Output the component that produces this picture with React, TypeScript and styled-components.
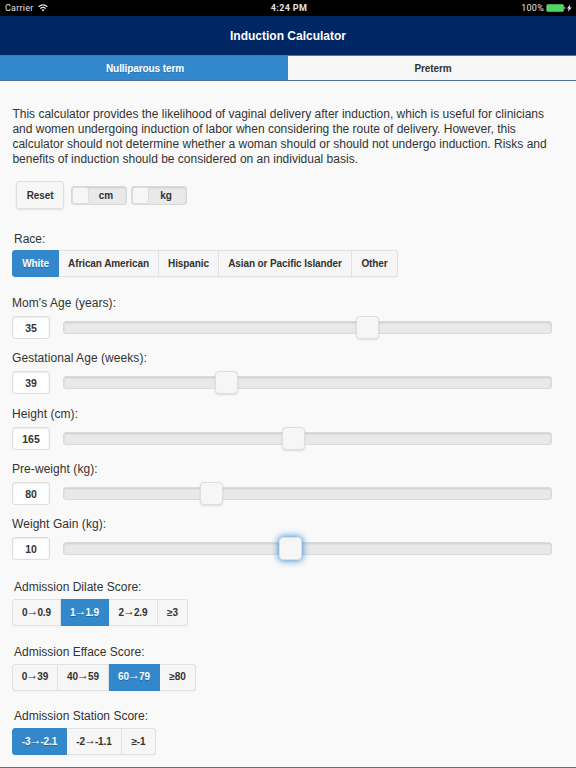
import React from "react";
import styled, { createGlobalStyle, css } from "styled-components";

const Global = createGlobalStyle`
  * { box-sizing: border-box; }
  html, body { margin: 0; padding: 0; background: #f9f9f9; }
  body { overflow: hidden; }
`;

const Page = styled.div`
  width: 576px;
  height: 768px;
  overflow: hidden;
  display: flex;
  flex-direction: column;
  background: #f9f9f9;
  color: #333;
  font-family: "Liberation Sans", Arial, Helvetica, sans-serif;
  font-size: 12px;
  border-bottom: 1px solid #6d6d6d;
`;

const StatusBar = styled.div`
  flex: none;
  height: 16px;
  display: grid;
  grid-template-columns: 1fr auto 1fr;
  align-items: center;
  padding: 0 4px 0 5px;
  background: #000;
  color: #e4e4e4;
  font: 9px/16px Roboto, "Liberation Sans", sans-serif;
  letter-spacing: 0.25px;
`;

const StatusSide = styled.div<{ $end?: boolean }>`
  display: flex;
  align-items: center;
  justify-content: ${(p) => (p.$end ? "flex-end" : "flex-start")};
  gap: ${(p) => (p.$end ? 2 : 4)}px;
`;

const Clock = styled.div`
  font-weight: 700;
  letter-spacing: 0.35px;
  padding-left: 1px;
`;

const Header = styled.header`
  flex: none;
  height: 39px;
  display: flex;
  align-items: center;
  justify-content: center;
  background: #002663;
  color: #fff;
  font-size: 12px;
  font-weight: 700;
  padding-top: 1px;
`;

const Tabs = styled.nav`
  flex: none;
  height: 26px;
  display: grid;
  grid-template-columns: 1fr 1fr;
  border-top: 1px solid #4674ae;
  border-bottom: 1px solid #4f6f9f;
`;

const Tab = styled.div<{ $active?: boolean }>`
  display: flex;
  align-items: center;
  justify-content: center;
  padding-top: 1px;
  padding-left: 2px;
  font-size: 10px;
  font-weight: 700;
  letter-spacing: -0.09px;
  background: ${(p) => (p.$active ? "#3388cc" : "#f6f6f6")};
  color: ${(p) => (p.$active ? "#fff" : "#333")};
  text-shadow: 0 1px 0 ${(p) => (p.$active ? "#0055884d" : "#f3f3f3")};
`;

const Content = styled.main`
  padding: 26px 12px 0;
`;

const Intro = styled.p`
  margin: 0;
  padding-left: 0.4px;
  height: 60px;
  line-height: 15px;
  white-space: nowrap;
`;

const IntroLine = styled.span`
  display: block;
`;

const Controls = styled.div`
  display: flex;
  align-items: center;
  height: 28px;
  margin: 14px 0 0 4px;
`;

const ResetButton = styled.button`
  width: 48px;
  height: 28px;
  margin-right: 7px;
  padding: 0;
  border: 1px solid #dfdfdf;
  border-radius: 3px;
  background: #f6f6f6;
  box-shadow: 0 1px 2px rgba(0, 0, 0, 0.09);
  color: #333;
  font: 700 10px "Liberation Sans", Arial, sans-serif;
  letter-spacing: -0.1px;
`;

const Toggle = styled.div`
  display: flex;
  width: 56px;
  height: 19px;
  margin-right: 4px;
  border: 1px solid #d8d8d8;
  border-radius: 3px;
  background: #e9e9e9;
  box-shadow: inset 0 1px 2px rgba(0, 0, 0, 0.12);
  font-size: 10px;
  font-weight: 700;
  line-height: 17px;
`;

const ToggleKnob = styled.div`
  width: 17px;
  height: 17px;
  border: 1px solid #dedede;
  border-radius: 3px;
  background: #f6f6f6;
`;

const ToggleLabel = styled.div`
  flex: 1;
  padding-right: 3px;
  text-align: center;
`;

const Label = styled.div<{ $height: number; $line?: number; $indent?: number; $spacing?: number }>`
  height: ${(p) => p.$height}px;
  line-height: ${(p) => p.$line ?? p.$height}px;
  padding-left: ${(p) => p.$indent ?? 0}px;
  letter-spacing: ${(p) => p.$spacing ?? 0}px;
  white-space: nowrap;
`;

const Field = styled.section<{ $gap: number }>`
  margin-top: ${(p) => p.$gap}px;
`;

const Segments = styled.div`
  display: flex;
  width: max-content;
  height: 27px;
  border-radius: 3px;
  box-shadow: 0 1px 2px rgba(0, 0, 0, 0.03);
`;

const Segment = styled.div<{ $width: number; $active?: boolean }>`
  display: flex;
  align-items: center;
  justify-content: center;
  width: ${(p) => p.$width}px;
  border: 1px solid #e1e1e1;
  border-left-width: 0;
  background: #f6f6f6;
  font-size: 10px;
  font-weight: 700;
  line-height: 12px;
  white-space: nowrap;
  letter-spacing: -0.1px;
  text-shadow: 0 1px 0 #f3f3f3;
  &:first-child {
    border-left-width: 1px;
    border-radius: 3px 0 0 3px;
  }
  &:last-child {
    border-radius: 0 3px 3px 0;
  }
  ${(p) =>
    p.$active &&
    css`
      background: #3388cc;
      border-color: #3388cc;
      color: #fff;
      text-shadow: 0 1px 0 #00558899;
    `}
`;

const Arrow = styled.span`
  margin: 0 -1px;
  padding-bottom: 4px;
  font-size: 12px;
  font-weight: 400;
  line-height: 10px;
`;

const Sliders = styled.div`
  margin-top: 19px;
`;

const SliderField = styled.div`
  height: 55.3px;
`;

const SliderRow = styled.div`
  display: flex;
  align-items: center;
  height: 23px;
  margin-top: 5px;
`;

const NumberBox = styled.div`
  width: 38px;
  height: 23px;
  margin-right: 13px;
  border: 1px solid #dedede;
  border-radius: 3px;
  background: #fff;
  box-shadow: inset 0 1px 2px rgba(0, 0, 0, 0.09);
  text-align: center;
  font-size: 10.5px;
  font-weight: 700;
  line-height: 22px;
`;

const Track = styled.div`
  display: flex;
  align-items: center;
  width: 489px;
  height: 13px;
  border: 1px solid #dadada;
  border-radius: 3px;
  background: #e9e9e9;
  box-shadow: inset 0 1px 2px rgba(0, 0, 0, 0.12);
`;

const Thumb = styled.div<{ $focus?: boolean }>`
  flex: none;
  width: 23px;
  height: 23px;
  border: 1px solid #dedede;
  border-radius: 4px;
  background: #f6f6f6;
  box-shadow: ${(p) =>
    p.$focus ? "0 0 7px 0.5px #3388cc" : "0 1px 2px rgba(0, 0, 0, 0.12)"};
`;

type Option = { text: string; width: number };

function Choice({ options, selected }: { options: Option[]; selected: number }) {
  return (
    <Segments>
      {options.map((o, i) => {
        const [from, to] = o.text.split("→");
        return (
          <Segment key={o.text} $width={o.width} $active={i === selected}>
            {from}
            {to !== undefined && <Arrow>→</Arrow>}
            {to}
          </Segment>
        );
      })}
    </Segments>
  );
}

const intro = [
  "This calculator provides the likelihood of vaginal delivery after induction, which is useful for clinicians",
  "and women undergoing induction of labor when considering the route of delivery. However, this",
  "calculator should not determine whether a woman should or should not undergo induction. Risks and",
  "benefits of induction should be considered on an individual basis.",
];

const races: Option[] = [
  { text: "White", width: 47 },
  { text: "African American", width: 100 },
  { text: "Hispanic", width: 60 },
  { text: "Asian or Pacific Islander", width: 133 },
  { text: "Other", width: 46 },
];

const sliders = [
  { label: "Mom's Age (years):", value: 35, offset: 291.5 },
  { label: "Gestational Age (weeks):", value: 39, offset: 151 },
  { label: "Height (cm):", value: 165, offset: 218 },
  { label: "Pre-weight (kg):", value: 80, offset: 136 },
  { label: "Weight Gain (kg):", value: 10, offset: 215, focus: true },
];

const scores = [
  {
    label: "Admission Dilate Score:",
    selected: 1,
    options: [
      { text: "0→0.9", width: 49 },
      { text: "1→1.9", width: 48 },
      { text: "2→2.9", width: 49 },
      { text: "≥3", width: 30 },
    ],
  },
  {
    label: "Admission Efface Score:",
    selected: 2,
    options: [
      { text: "0→39", width: 46 },
      { text: "40→59", width: 51 },
      { text: "60→79", width: 51 },
      { text: "≥80", width: 36 },
    ],
  },
  {
    label: "Admission Station Score:",
    selected: 0,
    options: [
      { text: "-3→-2.1", width: 55 },
      { text: "-2→-1.1", width: 55 },
      { text: "≥-1", width: 34 },
    ],
  },
];

function Wifi() {
  return (
    <svg width="10" height="8" viewBox="0 0 10 8" fill="none" stroke="#e8e8e8" strokeWidth="1.2">
      <path d="M.6 2.8Q5-.9 9.4 2.8M2.2 4.6Q5 2.3 7.8 4.6" />
      <path d="M3.5 5.8Q5 4.7 6.5 5.8L5 7.4Z" fill="#e8e8e8" stroke="none" />
    </svg>
  );
}

function Battery() {
  return (
    <svg width="26" height="8" viewBox="0 0 26 8">
      <rect x=".7" y=".6" width="17" height="6.8" rx="1.2" fill="#4cd964" stroke="#7ee58f" strokeWidth=".5" />
      <path d="M18.5 2.8q1 .2 1 1.2t-1 1.2Z" fill="#d8d8d8" />
      <path d="M24.2 .4 21 4.4h1.8L21.8 7.8 25.8 3.4h-2.2Z" fill="#eee" />
    </svg>
  );
}

export default function App() {
  return (
    <>
      <Global />
      <Page>
        <StatusBar>
          <StatusSide>
            <span>Carrier</span>
            <Wifi />
          </StatusSide>
          <Clock>4:24 PM</Clock>
          <StatusSide $end>
            <span>100%</span>
            <Battery />
          </StatusSide>
        </StatusBar>
        <Header>Induction Calculator</Header>
        <Tabs>
          <Tab $active>Nulliparous term</Tab>
          <Tab>Preterm</Tab>
        </Tabs>
        <Content>
          <Intro>
            {intro.map((line) => (
              <IntroLine key={line}>{line}</IntroLine>
            ))}
          </Intro>
          <Controls>
            <ResetButton>Reset</ResetButton>
            {["cm", "kg"].map((unit) => (
              <Toggle key={unit}>
                <ToggleKnob />
                <ToggleLabel>{unit}</ToggleLabel>
              </Toggle>
            ))}
          </Controls>
          <Field $gap={22}>
            <Label $height={19} $line={17} $indent={2}>Race:</Label>
            <Choice options={races} selected={0} />
          </Field>
          <Sliders>
            {sliders.map((s) => (
              <SliderField key={s.label}>
                <Label $height={15} $spacing={0.06}>{s.label}</Label>
                <SliderRow>
                  <NumberBox>{s.value}</NumberBox>
                  <Track>
                    <Thumb $focus={s.focus} style={{ marginLeft: s.offset }} />
                  </Track>
                </SliderRow>
              </SliderField>
            ))}
          </Sliders>
          {scores.map((s, i) => (
            <Field key={s.label} $gap={i === 0 ? 8 : 18.5}>
              <Label $height={19} $line={15} $indent={2}>{s.label}</Label>
              <Choice options={s.options} selected={s.selected} />
            </Field>
          ))}
        </Content>
      </Page>
    </>
  );
}
